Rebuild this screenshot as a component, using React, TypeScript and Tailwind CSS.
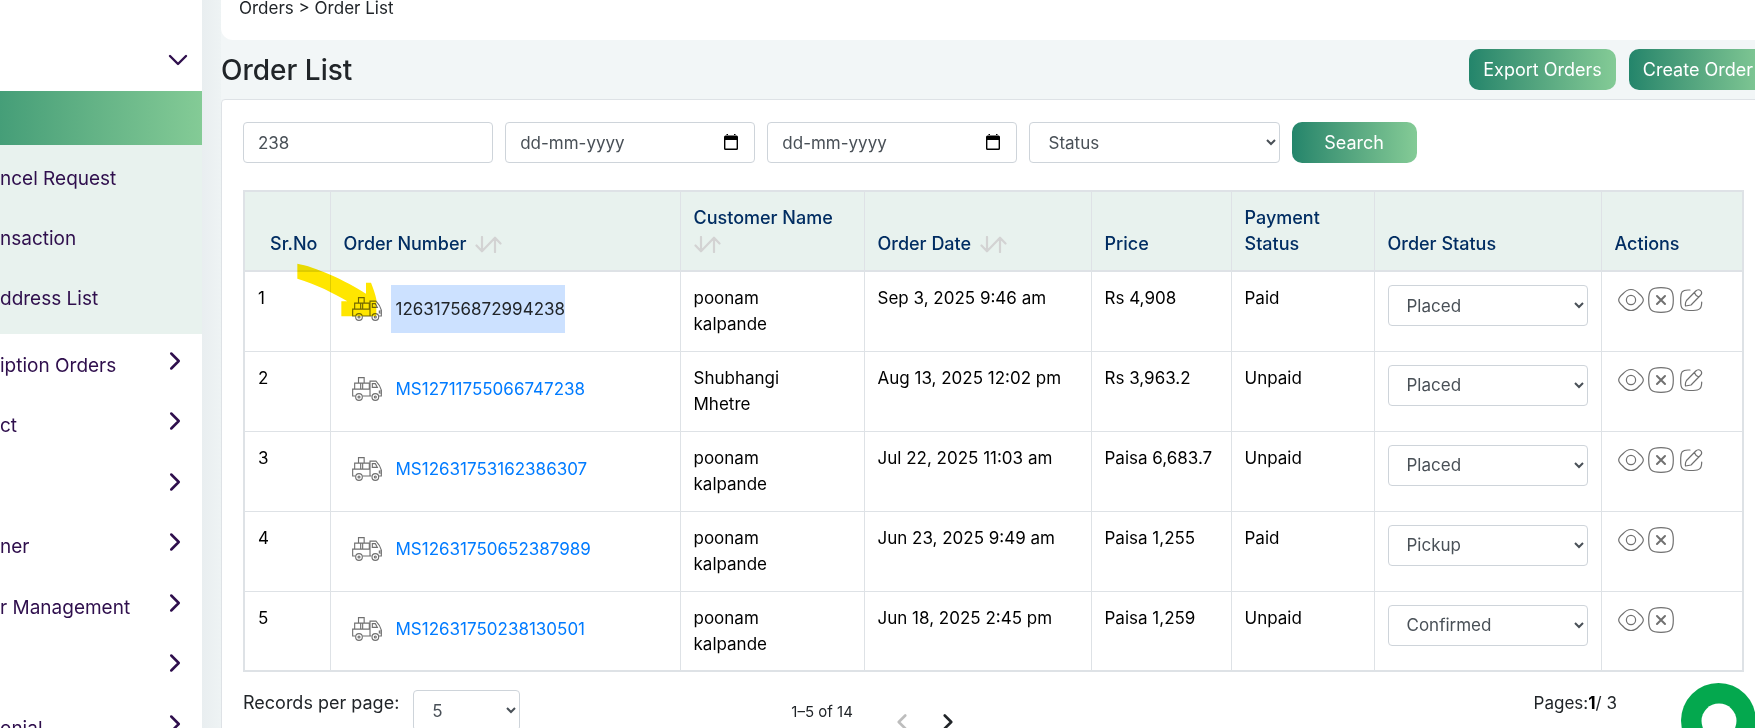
import { ChevronDown, ChevronLeft, ChevronRight } from 'lucide-react';

type Order = {
  id: string;
  customer: string;
  date: string;
  price: string;
  payment: string;
  status: string;
  editable: boolean;
  selected?: boolean;
};

const ORDERS: Order[] = [
  { id: '12631756872994238', customer: 'poonam kalpande', date: 'Sep 3, 2025 9:46 am', price: 'Rs 4,908', payment: 'Paid', status: 'Placed', editable: true, selected: true },
  { id: 'MS12711755066747238', customer: 'Shubhangi Mhetre', date: 'Aug 13, 2025 12:02 pm', price: 'Rs 3,963.2', payment: 'Unpaid', status: 'Placed', editable: true },
  { id: 'MS12631753162386307', customer: 'poonam kalpande', date: 'Jul 22, 2025 11:03 am', price: 'Paisa 6,683.7', payment: 'Unpaid', status: 'Placed', editable: true },
  { id: 'MS12631750652387989', customer: 'poonam kalpande', date: 'Jun 23, 2025 9:49 am', price: 'Paisa 1,255', payment: 'Paid', status: 'Pickup', editable: false },
  { id: 'MS12631750238130501', customer: 'poonam kalpande', date: 'Jun 18, 2025 2:45 pm', price: 'Paisa 1,259', payment: 'Unpaid', status: 'Confirmed', editable: false },
];

const SUB_ITEMS = ['ncel Request', 'nsaction', 'ddress List'];
const MENU_ITEMS = ['iption Orders', 'ct', '', 'ner', 'r Management', '', 'onial'];

const fieldClass =
  'h-[41px] w-full rounded border border-[#ced4da] bg-white text-[17px] text-[#495057] placeholder:text-[#495057] outline-none';
const buttonClass =
  'h-[41px] rounded-[10px] bg-linear-to-r from-[#23856b] to-[#84cb96] text-lg text-white';
const cellClass = 'border border-[#dee2e6] p-[13px] align-top';
const headClass =
  'border border-b-2 border-[#dee2e6] p-[13px] text-left align-bottom text-lg leading-[26px] font-medium text-[#012d62]';

function SortIcon() {
  return (
    <svg viewBox="0 0 27 17" className="inline-block h-[17px] w-[27px] align-[-3px]" fill="none" stroke="#d3d3d3" strokeWidth="2.2" strokeLinecap="round" strokeLinejoin="round">
      <path d="M7 1v14M1.5 9.5 7 15.3 20 1.700M14.500 7.500 20 1.700l5.500 5.800M20 2v14" />
    </svg>
  );
}

function TruckIcon() {
  return (
    <svg viewBox="0 0 90 72" className="h-6 w-[30px] shrink-0" fill="none" stroke="#707070" strokeWidth="3.4">
      <path d="M19.500 18V2h17v16M8 36V18.500h44V36M26 18.500V36M32 18.500V36" />
      <path d="M10 57H2V36.500h52M32 57h26M54 57V12.500h18c8 8 13 16 16 27V57h-8" />
      <path d="M61 20h9l6 11H61zM88 42h-6v6h6" />
      <circle cx="21" cy="60" r="10" fill="#fff" fillOpacity="0.4" />
      <circle cx="21" cy="60" r="3" />
      <circle cx="70" cy="60" r="10" fill="#fff" fillOpacity="0.4" />
      <circle cx="70" cy="60" r="3" />
    </svg>
  );
}

function EyeIcon() {
  return (
    <svg viewBox="0 0 26 26" className="size-[26px]" fill="none" stroke="#707070" strokeWidth="1.2">
      <path d="M.7 13c0-2 1.600-3.900 4-6C7.200 4.100 9.800 2.500 13 2.500S18.800 4.100 21.300 7c2.400 2.100 4 4 4 6s-1.600 3.900-4 6c-2.500 2.900-5.100 4.500-8.300 4.500S7.200 21.900 4.700 19C2.300 16.900.7 15 .7 13z" />
      <circle cx="13" cy="13" r="4.600" />
    </svg>
  );
}

function CancelIcon() {
  return (
    <svg viewBox="0 0 26 26" className="size-[26px]" fill="none" stroke="#707070">
      <path d="M13 .7c10 0 12.300 2.300 12.300 12.300S23 25.300 13 25.300.7 23 .7 13 3 .7 13 .7z" strokeWidth="1.2" />
      <path d="m9 9 8 8M17 9l-8 8" strokeWidth="2" strokeLinecap="round" />
    </svg>
  );
}

function EditIcon() {
  return (
    <svg viewBox="0 0 24 26" className="h-[26px] w-6" fill="none" stroke="#707070" strokeWidth="1.2" strokeLinecap="round" strokeLinejoin="round">
      <path d="M11 3H9C3 3 1.700 5.500 1.700 11v4c0 6.500 2 8.500 8.500 8.500h4c6.500 0 8.500-2 8.500-8.500" />
      <path d="M7.500 13.500 16.800 4c1.600-1.600 3.500-1.600 4.800-.3s1.300 3.200-.3 4.800L12 18l-5.500 1c-.3-1.800 0-4 1-5.500zM15.300 5.500c.8 2.200 2.300 3.700 4.500 4.500" />
    </svg>
  );
}

function CalendarIcon() {
  return (
    <svg viewBox="0 0 14 16" className="pointer-events-none absolute top-3 right-[17px] h-4 w-[14px]">
      <path d="M1.500 1.500h11a1.500 1.500 0 0 1 1.500 1.500v11.500a1.500 1.500 0 0 1-1.500 1.500h-11A1.500 1.500 0 0 1 0 14.500V3a1.500 1.500 0 0 1 1.500-1.500zM1.400 6v8.600h11.200V6zM2.500 0h1.500v2H2.500zM10 0h1.500v2H10z" fill="#000" fillRule="evenodd" />
    </svg>
  );
}

function Sidebar() {
  return (
    <nav className="w-[202px] shrink-0 bg-white text-[19px] text-[#2f0f4d]">
      <button aria-label="Collapse orders" className="flex h-[91px] w-full items-center justify-end pt-7 pr-2">
        <ChevronDown className="size-8" strokeWidth={1.8} />
      </button>
      <div className="h-[54px] bg-linear-to-r from-[#459e78] to-[#84cb96]" />
      <ul className="bg-[#e8f2ee] pt-1 pb-[5px]">
        {SUB_ITEMS.map((item) => (
          <li key={item}>
            <a href="#" className="flex h-[60px] items-center">{item}</a>
          </li>
        ))}
      </ul>
      <ul className="pt-[2px]">
        {MENU_ITEMS.map((item, i) => (
          <li key={i} className="even:mb-px">
            <a href="#" aria-label={item || 'Menu'} className="flex h-[60px] items-center justify-between pr-3">
              <span>{item}</span>
              <ChevronRight className="mb-[10px] size-[30px]" strokeWidth={2} />
            </a>
          </li>
        ))}
      </ul>
    </nav>
  );
}

function OrderRow({ order, index }: { order: Order; index: number }) {
  return (
    <tr className="h-20">
      <td className={cellClass}>{index + 1}</td>
      <td className={cellClass}>
        <div className="flex h-12 items-center gap-[9px] pl-2">
          <TruckIcon />
          <a
            href="#"
            className={order.selected ? 'flex h-12 items-center bg-[#cce1ff] pl-[5px] text-[#212529]' : 'flex h-12 items-center pl-[5px] text-[#007bff]'}
          >
            {order.id}
          </a>
        </div>
      </td>
      <td className={cellClass}>
        <div className="pr-7">{order.customer}</div>
      </td>
      <td className={cellClass}>{order.date}</td>
      <td className={cellClass}>{order.price}</td>
      <td className={cellClass}>{order.payment}</td>
      <td className={cellClass}>
        <select aria-label="Order status" defaultValue={order.status} className={`${fieldClass} pl-[14px]`}>
          <option>Placed</option>
          <option>Pickup</option>
          <option>Confirmed</option>
        </select>
      </td>
      <td className={cellClass}>
        <div className="flex gap-1 pt-[2px] pl-[3px]">
          <button aria-label="View order"><EyeIcon /></button>
          <button aria-label="Cancel order"><CancelIcon /></button>
          {order.editable && <button aria-label="Edit order" className="pl-px"><EditIcon /></button>}
        </div>
      </td>
    </tr>
  );
}

export default function App() {
  return (
    <div className="flex h-screen overflow-hidden bg-[#f2f6f7] font-['Inter',sans-serif] text-[17px] leading-[26px] text-[#212529]">
      <Sidebar />
      <div className="w-[19px] shrink-0 bg-linear-to-r from-[#e9eef0] to-[#eef3f4]" />

      <main className="-mr-3 min-w-0 flex-1">
        <div className="h-10 rounded-b-xl bg-white pl-[18px]">
          <p className="leading-4">Orders &gt; Order List</p>
        </div>

        <div className="flex h-[59px] items-center justify-between">
          <h1 className="text-[28px] font-medium">Order List</h1>
          <div className="flex gap-[13px]">
            <button className={`${buttonClass} px-[14px]`}>Export Orders</button>
            <button className={`${buttonClass} px-[14px]`}>Create Order</button>
          </div>
        </div>

        <section className="rounded border border-[#dee2e6] bg-white pt-[22px] pr-[22px] pb-10 pl-[21px]">
          <form className="flex gap-3" onSubmit={(e) => e.preventDefault()}>
            <div className="w-1/6">
              <input aria-label="Order number" defaultValue="238" className={`${fieldClass} px-[14px]`} />
            </div>
            <div className="relative w-1/6">
              <input aria-label="From date" placeholder="dd-mm-yyyy" className={`${fieldClass} px-[14px]`} />
              <CalendarIcon />
            </div>
            <div className="relative w-1/6">
              <input aria-label="To date" placeholder="dd-mm-yyyy" className={`${fieldClass} px-[14px]`} />
              <CalendarIcon />
            </div>
            <div className="w-1/6">
              <select aria-label="Status" className={`${fieldClass} pl-[14px]`}>
                <option>Status</option>
              </select>
            </div>
            <button className={`${buttonClass} w-[125px]`}>Search</button>
          </form>

          <div className="relative mt-[27px]">
            <table className="w-full table-fixed border-collapse border-2 border-[#dee2e6] text-black">
              <colgroup>
                <col className="w-[86px]" />
                <col />
                <col className="w-[184px]" />
                <col className="w-[227px]" />
                <col className="w-[140px]" />
                <col className="w-[143px]" />
                <col className="w-[227px]" />
                <col className="w-[142px]" />
              </colgroup>
              <thead className="bg-[#e8f2ee]">
                <tr>
                  <th className={`${headClass} pl-[25px]`}>Sr.No</th>
                  <th className={headClass}><span className="mr-1">Order Number</span> <SortIcon /></th>
                  <th className={headClass}><span className="mr-1">Customer Name</span> <SortIcon /></th>
                  <th className={headClass}><span className="mr-1">Order Date</span> <SortIcon /></th>
                  <th className={headClass}>Price</th>
                  <th className={headClass}>Payment Status</th>
                  <th className={headClass}>Order Status</th>
                  <th className={headClass}>Actions</th>
                </tr>
              </thead>
              <tbody>
                {ORDERS.map((order, i) => (
                  <OrderRow key={order.id} order={order} index={i} />
                ))}
              </tbody>
            </table>

            {/* highlighter arrow over the first row's tracking icon */}
            <svg viewBox="200 278 240 162" className="pointer-events-none absolute top-[73px] left-[54px] h-[54px] w-20 mix-blend-multiply">
              <path d="M201 280c50 8 145 50 206 90v-33h15c6 16 13 34 16 50v51H333v-45h18c-40-24-94-52-150-68z" fill="#ffe600" />
            </svg>
          </div>

          <footer className="grid grid-cols-3 items-start pt-[18px]">
            <div className="flex gap-[14px]">
              <label htmlFor="per-page" className="text-lg leading-[26px]">Records per page:</label>
              <select id="per-page" defaultValue="5" className="h-[41px] w-[107px] rounded border border-[#ced4da] bg-white pl-[14px] text-[17px] text-[#495057]">
                <option>5</option>
                <option>10</option>
              </select>
            </div>
            <div className="flex items-start pt-[9px] pl-12">
              <span className="text-[15px] leading-[26px]">1–5 of 14</span>
              <button aria-label="Previous page" className="mt-[10px] ml-9 text-[#bdbdbd]"><ChevronLeft className="size-[26px]" strokeWidth={2.4} /></button>
              <button aria-label="Next page" className="mt-[10px] ml-5"><ChevronRight className="size-[26px]" strokeWidth={2.4} /></button>
            </div>
            <p className="pr-[127px] text-right">
              Pages:<b className="text-black">1</b>/ 3
            </p>
          </footer>
        </section>
      </main>

      <button aria-label="Chat" className="fixed -right-px -bottom-[30px] flex size-[75px] items-center justify-center rounded-full bg-[#04a84e]">
        <svg viewBox="0 0 36 36" className="size-9">
          <circle cx="18" cy="18" r="17.500" fill="#fff" />
          <path d="M16 25.800h13" stroke="#04a84e" strokeWidth="1.500" />
        </svg>
      </button>
    </div>
  );
}
